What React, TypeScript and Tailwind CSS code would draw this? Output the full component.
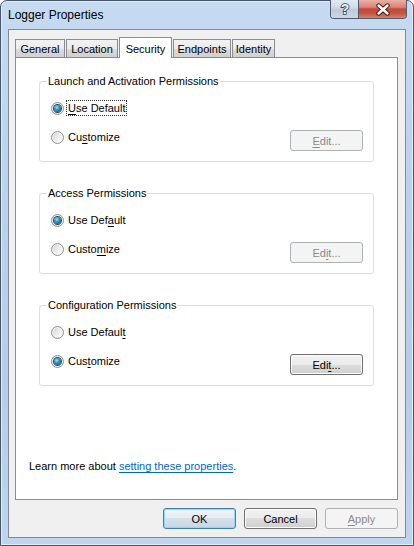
import React from "react";

const U = ({ children }: { children: React.ReactNode }) => (
  <span className="underline underline-offset-[2px]">{children}</span>
);

function Radio({ checked }: { checked?: boolean }) {
  return (
    <span className="flex h-[13px] w-[13px] shrink-0 items-center justify-center rounded-full border border-[#8e8f8f] bg-[linear-gradient(135deg,#cfcfcf_0%,#e9e9e9_45%,#fdfdfd_100%)] shadow-[inset_0_0_0_1px_#f4f4f4]">
      {checked && (
        <span className="h-[7px] w-[7px] rounded-full bg-[radial-gradient(circle_at_40%_35%,#9fe3f7_0%,#3a9cc4_35%,#175b7f_75%,#0e3e5b_100%)] shadow-[0_0_0_1px_#1d4e6b]" />
      )}
    </span>
  );
}

function RadioRow({
  checked,
  children,
  focus,
}: {
  checked?: boolean;
  children: React.ReactNode;
  focus?: boolean;
}) {
  return (
    <div className="flex h-[20px] items-center gap-[2px]">
      <Radio checked={checked} />
      <span
        className={
          focus
            ? "border border-dotted border-[#333] px-[1px] leading-[14px]"
            : "border border-transparent px-[1px] leading-[14px]"
        }
      >
        {children}
      </span>
    </div>
  );
}

function Btn({
  children,
  disabled,
  primary,
}: {
  children: React.ReactNode;
  disabled?: boolean;
  primary?: boolean;
}) {
  const base =
    "flex h-[21px] w-[73px] shrink-0 items-center justify-center rounded-[3px] border text-[11px] leading-[14px]";
  if (disabled)
    return (
      <div className={base + " border-[#adb2b5] bg-[#f4f4f4] text-[#8a8a8a]"}>
        {children}
      </div>
    );
  if (primary)
    return (
      <div
        className={
          base +
          " border-[#3c7fb1] bg-[linear-gradient(#eef4f8_0%,#e5edf3_50%,#d5e1ea_50%,#c8d7e3_100%)] text-black shadow-[inset_0_0_0_1px_#8fd8f6]"
        }
      >
        {children}
      </div>
    );
  return (
    <div
      className={
        base +
        " border-[#707070] bg-[linear-gradient(#f2f2f2_0%,#ebebeb_50%,#dddddd_50%,#cfcfcf_100%)] text-black shadow-[inset_0_0_0_1px_#fbfbfb]"
      }
    >
      {children}
    </div>
  );
}

function Group({
  title,
  r1,
  r2,
  r1Checked,
  edit,
  editDisabled,
  focusFirst,
}: {
  title: React.ReactNode;
  r1: React.ReactNode;
  r2: React.ReactNode;
  r1Checked: boolean;
  edit: React.ReactNode;
  editDisabled: boolean;
  focusFirst?: boolean;
}) {
  return (
    <fieldset className="rounded-[3px] border border-[#d5dfe5] pb-[10px] pl-[7px] pr-[7px]">
      <legend className="px-[1px] leading-[14px] text-black">{title}</legend>
      <div className="flex flex-col pl-[4px] pr-[3px]">
        <div className="mt-[10px]">
          <RadioRow checked={r1Checked} focus={focusFirst}>
            {r1}
          </RadioRow>
        </div>
        <div className="mt-[9px] flex items-start justify-between">
          <RadioRow checked={!r1Checked}>{r2}</RadioRow>
          <div className="mt-[3px]">
            <Btn disabled={editDisabled}>{edit}</Btn>
          </div>
        </div>
      </div>
    </fieldset>
  );
}

const tabs = [
  { name: "General", w: "w-[50px]" },
  { name: "Location", w: "w-[52px]" },
  { name: "Security", w: "w-[53px]", sel: true },
  { name: "Endpoints", w: "w-[58px]" },
  { name: "Identity", w: "w-[43px]" },
];

export default function App() {
  return (
    <div className="h-[546px] w-[414px] overflow-hidden bg-white text-[11px] leading-[16px] text-black [font-family:'Liberation_Sans',Arial,sans-serif]">
      <div className="flex h-full flex-col rounded-t-[7px] border border-[#44546b] bg-[linear-gradient(180deg,#c6dbf1_0%,#bcd3ec_30%,#b6cde7_70%,#bfd5ed_100%)] px-[7px] pb-[7px] shadow-[inset_0_0_0_1px_#e3eefa]">
        {/* title bar */}
        <div className="flex h-[28px] shrink-0 items-start justify-between">
          <div className="pt-[6px] text-[12px] leading-[16px] text-black">
            Logger Properties
          </div>
          <div className="-mr-px -mt-px flex h-[19px] overflow-hidden rounded-b-[4px] border border-t-0 border-[#4d5c72]">
            <div className="flex w-[28px] items-center justify-center border-r border-[#4d5c72] bg-[linear-gradient(#e2e9f2_0%,#d0dae6_45%,#bfcbda_50%,#cbd6e4_100%)]">
              <svg width="14" height="16" viewBox="0 0 14 16">
                <text
                  x="7"
                  y="13"
                  textAnchor="middle"
                  fontSize="14"
                  fontWeight="bold"
                  fontFamily="Liberation Sans, Arial, sans-serif"
                  fill="#eef2f6"
                  stroke="#3a4556"
                  strokeWidth="1.6"
                  paintOrder="stroke"
                >
                  ?
                </text>
              </svg>
            </div>
            <div className="flex w-[47px] items-center justify-center bg-[linear-gradient(#eab0a2_0%,#d98374_40%,#c5483a_50%,#c45542_75%,#d9826a_100%)]">
              <svg width="16" height="13" viewBox="0 0 16 13">
                <path
                  d="M3.5 2.5 L12.5 10.5 M12.5 2.5 L3.5 10.5"
                  stroke="#4b1f17"
                  strokeWidth="4.4"
                  strokeLinecap="round"
                />
                <path
                  d="M3.5 2.5 L12.5 10.5 M12.5 2.5 L3.5 10.5"
                  stroke="#ffffff"
                  strokeWidth="2.4"
                  strokeLinecap="round"
                />
              </svg>
            </div>
          </div>
        </div>

        {/* client area */}
        <div className="flex flex-1 flex-col border border-[#7d8b9d] bg-[#f0f0f0] pb-[8px] pl-[6px] pr-[7px] pt-[7px]">
          {/* tabs */}
          <div className="flex h-[20px] shrink-0 items-end gap-px">
            {tabs.map((t) =>
              t.sel ? (
                <div
                  key={t.name}
                  className={
                    t.w +
                    " relative z-10 -mb-px flex h-[21px] items-start justify-center border border-b-0 border-[#898c95] bg-white pt-[3px] text-black"
                  }
                >
                  {t.name}
                </div>
              ) : (
                <div
                  key={t.name}
                  className={
                    t.w +
                    " flex h-[18px] items-center justify-center border border-b-0 border-[#898c95] bg-[linear-gradient(#f2f2f2_0%,#ebebeb_50%,#dddddd_50%,#cfcfcf_100%)] text-black"
                  }
                >
                  {t.name}
                </div>
              )
            )}
          </div>

          {/* panel */}
          <div className="flex flex-1 flex-col border border-[#898c95] bg-white px-[13px] pb-[26px] pt-[16px]">
            <div className="mx-[10px] flex flex-col gap-[24px]">
              <Group
                title="Launch and Activation Permissions"
                r1={
                  <>
                    <U>U</U>se Default
                  </>
                }
                r2={
                  <>
                    Cu<U>s</U>tomize
                  </>
                }
                r1Checked
                focusFirst
                edit={
                  <>
                    <U>E</U>dit...
                  </>
                }
                editDisabled
              />
              <Group
                title="Access Permissions"
                r1={
                  <>
                    Use Def<U>a</U>ult
                  </>
                }
                r2={
                  <>
                    Custo<U>m</U>ize
                  </>
                }
                r1Checked
                edit={
                  <>
                    Ed<U>i</U>t...
                  </>
                }
                editDisabled
              />
              <Group
                title="Configuration Permissions"
                r1={
                  <>
                    Use Defaul<U>t</U>
                  </>
                }
                r2={
                  <>
                    Cus<U>t</U>omize
                  </>
                }
                r1Checked={false}
                edit={
                  <>
                    Edi<U>t</U>...
                  </>
                }
                editDisabled={false}
              />
            </div>
            <div className="mt-auto leading-[14px]">
              Learn more about{" "}
              <span className="text-[#0066cc] underline underline-offset-[2px]">
                setting these properties
              </span>
              .
            </div>
          </div>

          {/* buttons */}
          <div className="mt-[8px] flex shrink-0 justify-end gap-[8px]">
            <Btn primary>OK</Btn>
            <Btn>Cancel</Btn>
            <Btn disabled>
              <U>A</U>pply
            </Btn>
          </div>
        </div>
      </div>
    </div>
  );
}
